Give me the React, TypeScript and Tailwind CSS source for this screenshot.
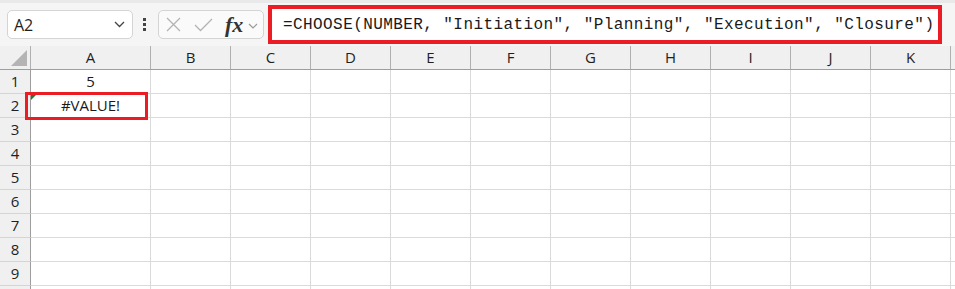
import React from "react";

const cols = ["A", "B", "C", "D", "E", "F", "G", "H", "I", "J", "K"];
const rows = [1, 2, 3, 4, 5, 6, 7, 8, 9, 10];
const font = { fontFamily: '"Open Sans", "Noto Sans", Arial, sans-serif' };

function colWidth(c: string) {
  return c === "A" ? "w-[120px]" : "w-[80px]";
}

function Toolbar() {
  return (
    <div className="relative flex h-[46px] items-center bg-[#f5f5f5] border-t-[3px] border-[#e9e9e9]">
      {/* name box */}
      <div className="ml-[7px] flex h-[29px] w-[126px] items-center justify-between rounded-[5px] border border-[#d4d4d4] bg-white pl-[6px] pr-[7px] text-[16px] text-[#1f1f1f]">
        <span>A2</span>
        <svg width="11" height="7" viewBox="0 0 11 7" fill="none">
          <path d="M1 1l4.5 4.5L10 1" stroke="#444" strokeWidth="1.3" />
        </svg>
      </div>
      {/* dots */}
      <div className="ml-[10px] flex w-[4px] flex-col gap-[2px]">
        <span className="h-[3px] w-[3px] bg-[#444]" />
        <span className="h-[3px] w-[3px] bg-[#444]" />
        <span className="h-[3px] w-[3px] bg-[#444]" />
      </div>
      {/* cancel / enter / fx */}
      <div className="ml-[11px] flex h-[29px] w-[106px] items-center rounded-[5px] border border-[#d4d4d4] bg-[#fafafa] pl-[7px]">
        <svg width="15" height="15" viewBox="0 0 15 15" fill="none">
          <path d="M1 1l13 13M14 1L1 14" stroke="#b3b3b3" strokeWidth="1.3" />
        </svg>
        <svg className="ml-[13px]" width="19" height="14" viewBox="0 0 19 14" fill="none">
          <path d="M1 7l5.5 5.5L18 1" stroke="#b3b3b3" strokeWidth="1.3" />
        </svg>
        <span
          className="ml-[12px] text-[22px] font-bold italic leading-none text-[#333]"
          style={{ fontFamily: '"Liberation Serif", "Times New Roman", serif' }}
        >
          fx
        </span>
        <svg className="ml-[5px] mt-[2px]" width="10" height="6" viewBox="0 0 10 6" fill="none">
          <path d="M1 1l4 4 4-4" stroke="#9a9a9a" strokeWidth="1.2" />
        </svg>
      </div>
      {/* formula */}
      <div className="ml-[4px] flex h-[39px] w-[674px] items-center border-4 border-[#ec1c24] bg-white pl-[11px]">
        <span
          className="whitespace-pre text-[16px] tracking-[0.42px] text-[#1a1a1a]"
          style={{ fontFamily: '"Liberation Mono", "DejaVu Sans Mono", monospace' }}
        >
          =CHOOSE(NUMBER, "Initiation", "Planning", "Execution", "Closure")
        </span>
      </div>
    </div>
  );
}

export default function App() {
  return (
    <div className="h-[289px] w-[955px] overflow-hidden bg-white" style={font}>
      <Toolbar />
      <div className="relative">
        {/* header row */}
        <div className="flex h-[24px] border-b border-[#9e9e9e] bg-[#f0f0f0]">
          <div className="flex h-full w-[31px] shrink-0 items-end justify-end border-r border-[#b0b0b0] pb-[3px] pr-[3px]">
            <svg width="16" height="16" viewBox="0 0 16 16">
              <path d="M16 0V16H0Z" fill="#b4b4b4" />
            </svg>
          </div>
          {cols.map((c) => (
            <div
              key={c}
              className={`${colWidth(c)} flex shrink-0 items-center justify-center border-r border-[#b0b0b0] text-[15px] text-[#1f1f1f]`}
            >
              {c}
            </div>
          ))}
          <div className="flex-1" />
        </div>
        {rows.map((r) => (
          <div key={r} className="flex h-[24px]">
            <div className="flex w-[31px] shrink-0 items-center justify-center border-b border-r border-b-[#d4d4d4] border-r-[#9e9e9e] bg-[#f0f0f0] text-[15px] text-[#1f1f1f]">
              {r}
            </div>
            {cols.map((c) => (
              <div
                key={c}
                className={`${colWidth(c)} flex shrink-0 items-center justify-center border-b border-r border-[#dadada] text-[15px] text-[#1a1a1a]`}
              >
                {c === "A" && r === 1 ? "5" : c === "A" && r === 2 ? "#VALUE!" : ""}
              </div>
            ))}
            <div className="flex-1 border-b border-[#dadada]" />
          </div>
        ))}
        {/* error indicator */}
        <svg className="absolute left-[31px] top-[48px]" width="6" height="6" viewBox="0 0 6 6">
          <path d="M0 0H6L0 6Z" fill="#1e7b34" />
        </svg>
        {/* highlight around A2 */}
        <div className="absolute left-[25px] top-[46px] h-[28px] w-[123px] border-[3px] border-[#ec1c24]" />
      </div>
    </div>
  );
}
